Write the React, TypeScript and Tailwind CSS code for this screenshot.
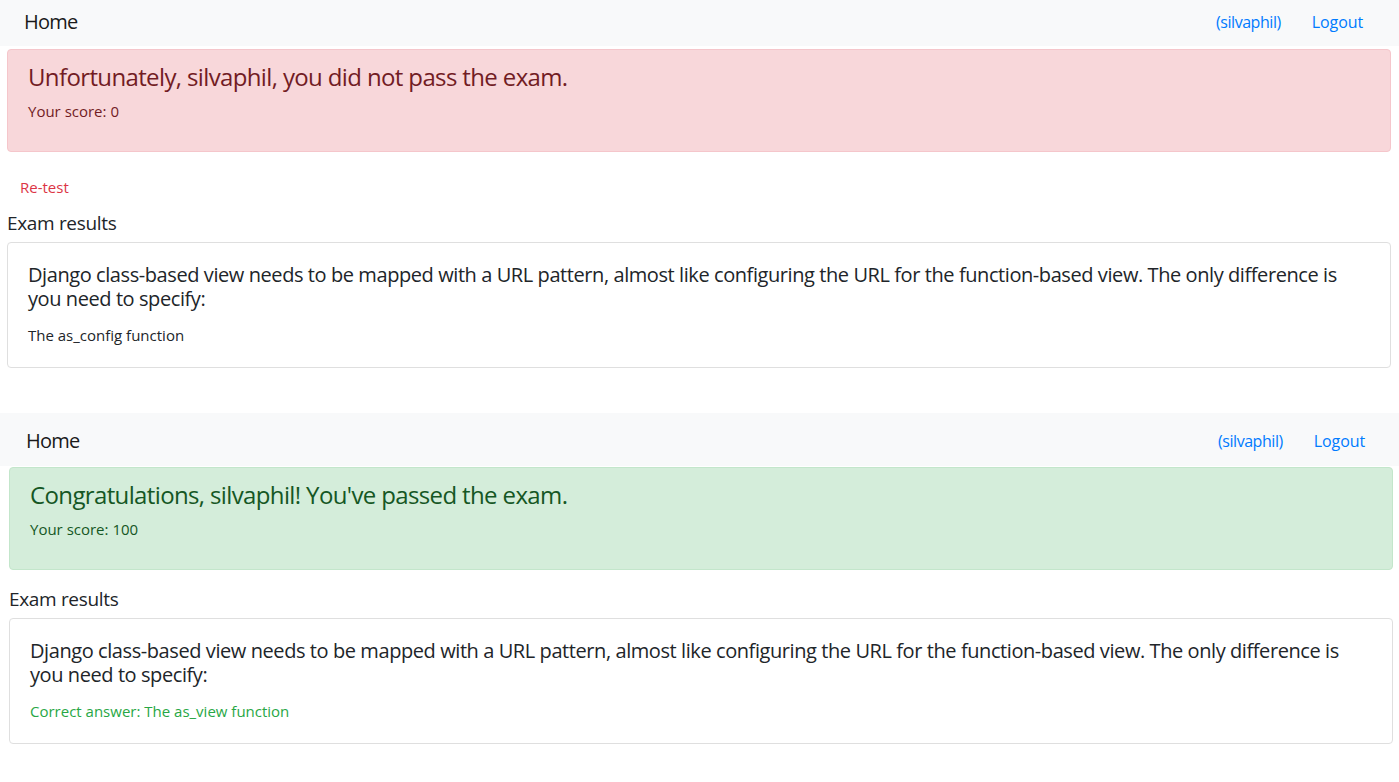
import React from "react";

const font = { fontFamily: '"Open Sans", "Noto Sans", Arial, sans-serif' };

function Navbar({ h, shift }: { h: string; shift: boolean }) {
  return (
    <div className={`flex items-center justify-between bg-[#f8f9fa] ${h} ${shift ? "pl-[26px] pr-[34px]" : "pl-[24px] pr-[36px]"}`}>
      <span className="text-[20px] leading-[30px] tracking-[-0.8px] text-[#1a1a1a]">Home</span>
      <div className="flex items-center gap-[31px] text-[16px] leading-[24px] text-[#007bff]">
        <span className="tracking-[-0.45px]">(silvaphil)</span>
        <span className="tracking-[-0.1px]">Logout</span>
      </div>
    </div>
  );
}

function Card({ answer, correct }: { answer: string; correct: boolean }) {
  return (
    <div className="rounded-[4px] border border-[#dfdfdf] bg-white px-[20px] pb-[20px] pt-[20px]">
      <div className="text-[20px] leading-[24px] tracking-[-0.42px] text-[#212529]">
        Django class-based view needs to be mapped with a URL pattern, almost like configuring the URL for the function-based view. The only difference is you need to specify:
      </div>
      <div className={`mt-[12px] text-[15px] leading-[24px] ${correct ? "text-[#28a745]" : "text-[#212529]"}`}>{answer}</div>
    </div>
  );
}

export default function App() {
  return (
    <div className="min-h-[782px] w-[1399px] bg-white" style={font}>
      {/* First screenshot */}
      <div>
        <div className="pb-[3px]">
          <Navbar h="h-[46px] pb-[2px]" shift={false} />
        </div>
        <div className="ml-[7px] mr-[8px]">
          <div className="rounded-[4px] border border-[#f5c6cb] bg-[#f8d7da] px-[20px] pb-[12px] pt-[12px] text-[#721c24]">
            <div className="mb-[8px] text-[24px] leading-[29px] tracking-[-0.63px]">Unfortunately, silvaphil, you did not pass the exam.</div>
            <div className="mb-[16px] text-[15px] leading-[24px]">Your score: 0</div>
          </div>
          <div className="mt-[23px] pl-[13px] text-[15px] leading-[24px] text-[#dc3545]">Re-test</div>
          <div className="mt-[12px] text-[19px] leading-[24px] tracking-[-0.33px] text-[#212529]">Exam results</div>
          <div className="mt-[7px]">
            <Card answer="The as_config function" correct={false} />
          </div>
        </div>
      </div>

      {/* Second screenshot */}
      <div className="mt-[45px]">
        <div className="pb-[1px]">
          <Navbar h="h-[53px] pt-[2px]" shift={true} />
        </div>
        <div className="ml-[9px] mr-[6px]">
          <div className="rounded-[4px] border border-[#c3e6cb] bg-[#d4edda] px-[20px] pb-[12px] pt-[12px] text-[#155724]">
            <div className="mb-[8px] text-[24px] leading-[29px] tracking-[-0.63px]">Congratulations, silvaphil! You've passed the exam.</div>
            <div className="mb-[16px] text-[15px] leading-[24px]">Your score: 100</div>
          </div>
          <div className="mt-[17px] text-[19px] leading-[24px] tracking-[-0.33px] text-[#212529]">Exam results</div>
          <div className="mt-[7px]">
            <Card answer="Correct answer: The as_view function" correct={true} />
          </div>
        </div>
      </div>
    </div>
  );
}
